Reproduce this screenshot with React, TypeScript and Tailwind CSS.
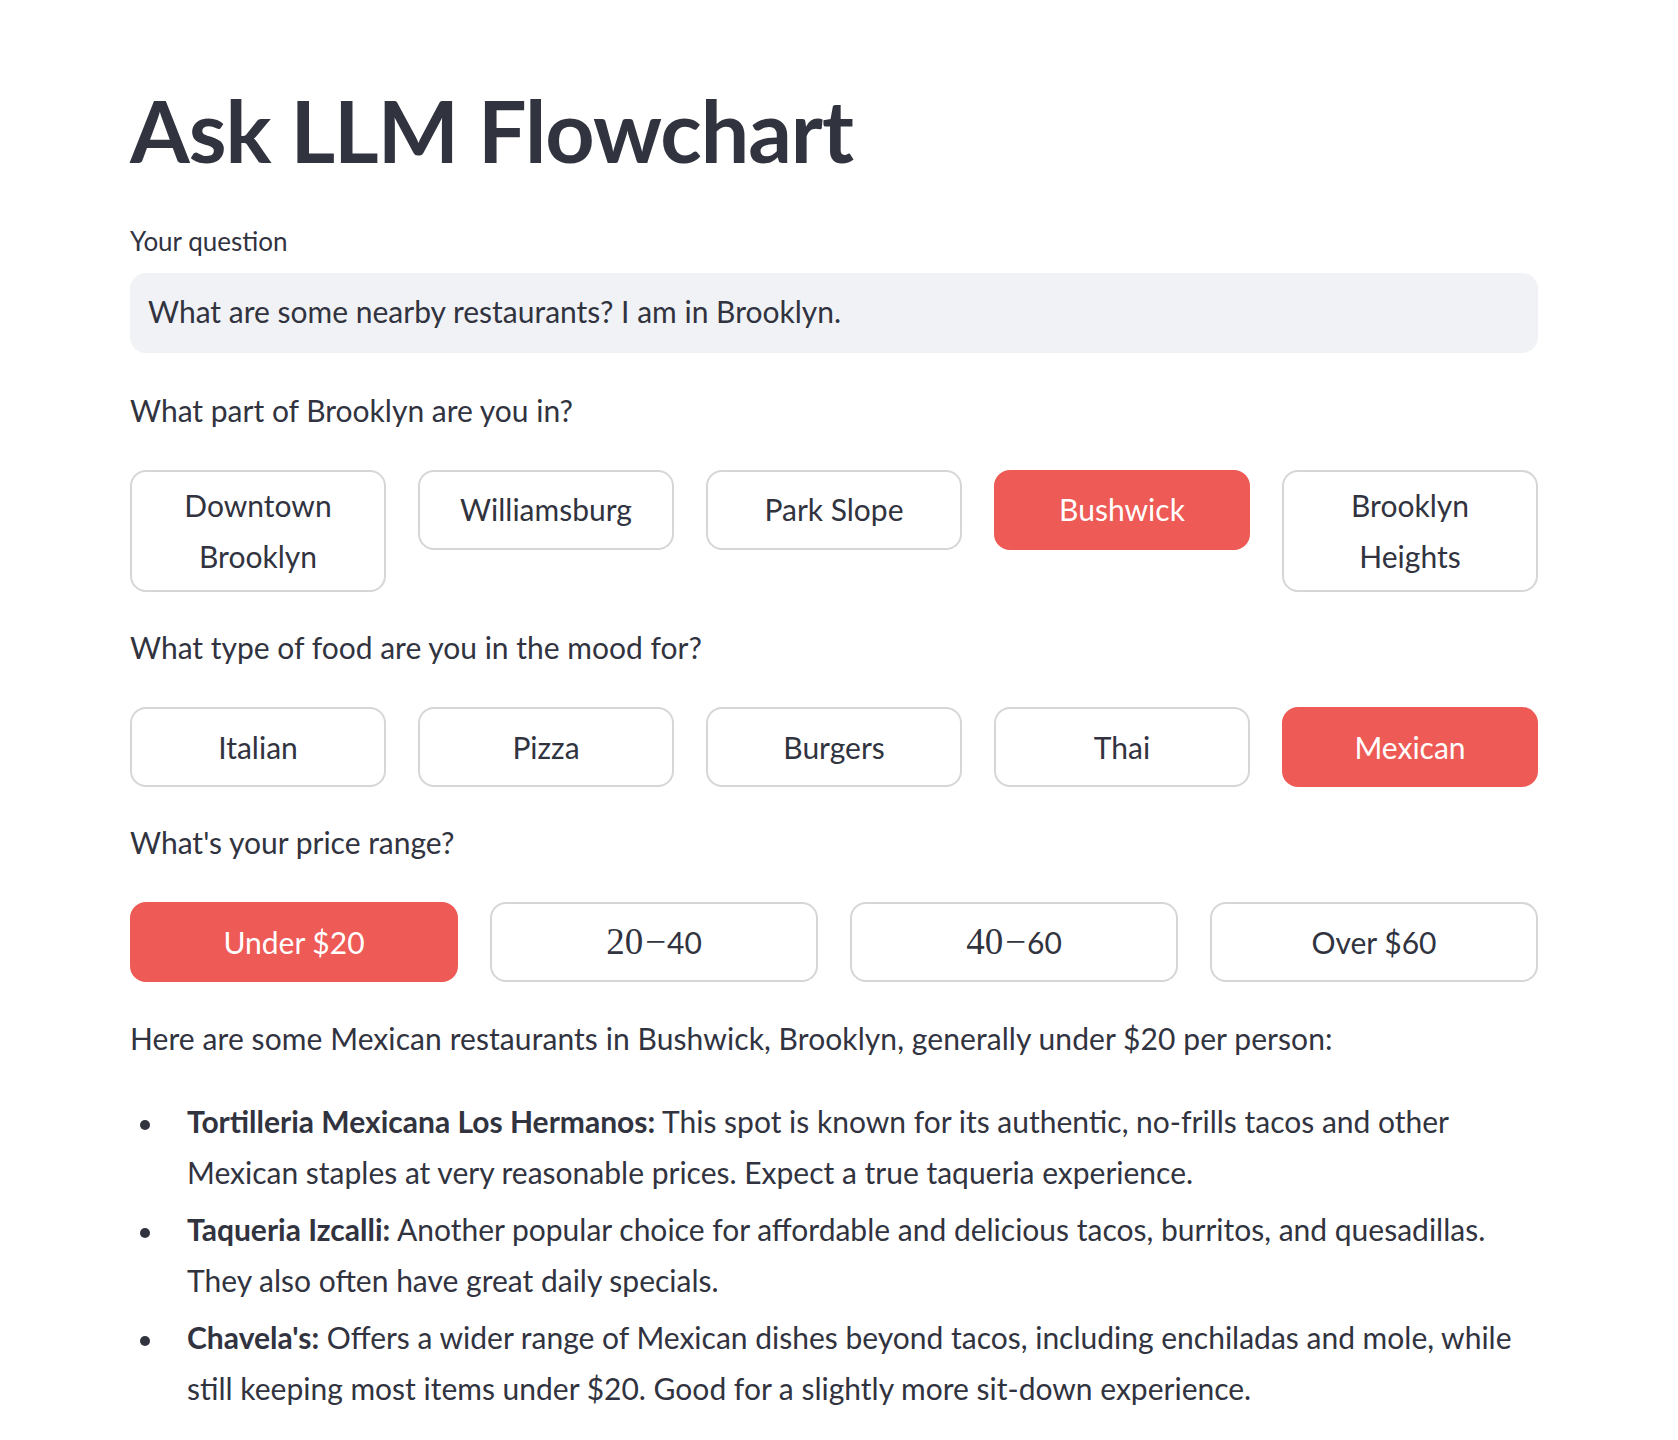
import React from 'react';

interface ChoiceProps {
  lines: React.ReactNode[];
  active?: boolean;
}

const Choice: React.FC<ChoiceProps> = ({ lines, active }) => {
  const base =
    'flex min-h-[80px] w-full flex-col items-center justify-center rounded-[16px] border-2 px-[24px] py-[8px] text-[30px] leading-[51.2px]';
  const tone = active
    ? 'border-[#ee5a55] bg-[#ee5a55] text-white'
    : 'border-[#d6d6d9] bg-white text-[#31333f]';
  return (
    <button className={`${base} ${tone}`}>
      {lines.map((line, i) => (
        <span key={i} className="whitespace-nowrap">
          {line}
        </span>
      ))}
    </button>
  );
};

const Range: React.FC<{ from: string; to: string }> = ({ from, to }) => (
  <span className="flex items-baseline">
    <span className="font-['Liberation_Serif',serif] text-[37px]">{from}</span>
    <span className="ml-[2px] mr-[1px] font-['Liberation_Serif',serif] text-[37px]">−</span>
    <span>{to}</span>
  </span>
);

const Bullet: React.FC<{ children: React.ReactNode }> = ({ children }) => (
  <li className="mb-[6px] flex">
    <span className="w-[57px] shrink-0">
      <span className="ml-[10px] mt-[24px] block h-[10px] w-[10px] rounded-full bg-[#31333f]" />
    </span>
    <span className="block">{children}</span>
  </li>
);

const App: React.FC = () => {
  return (
    <div className="min-h-[1440px] bg-white font-['Lato','Noto_Sans',sans-serif] text-[#31333f]">
      <div className="ml-[130px] w-[1408px] pt-[78px]">
        <h1 className="text-[86px] font-bold leading-[103px] tracking-[-1px]">Ask LLM Flowchart</h1>

        <div className="mt-[42px] text-[26px] leading-[36px]">Your question</div>
        <div className="mt-[14px] flex h-[80px] items-center rounded-[16px] bg-[#f0f2f6] px-[18px] pb-[4px] text-[30px]">
          What are some nearby restaurants? I am in Brooklyn.
        </div>

        <p className="mt-[32px] text-[30px] leading-[51px]">What part of Brooklyn are you in?</p>
        <div className="mt-[34px] grid grid-cols-5 items-start gap-x-[32px]">
          <Choice lines={['Downtown', 'Brooklyn']} />
          <Choice lines={['Williamsburg']} />
          <Choice lines={['Park Slope']} />
          <Choice lines={['Bushwick']} active />
          <Choice lines={['Brooklyn', 'Heights']} />
        </div>

        <p className="mt-[30px] text-[30px] leading-[51px]">What type of food are you in the mood for?</p>
        <div className="mt-[34px] grid grid-cols-5 items-start gap-x-[32px]">
          <Choice lines={['Italian']} />
          <Choice lines={['Pizza']} />
          <Choice lines={['Burgers']} />
          <Choice lines={['Thai']} />
          <Choice lines={['Mexican']} active />
        </div>

        <p className="mt-[30px] text-[30px] leading-[51px]">What's your price range?</p>
        <div className="mt-[34px] grid grid-cols-4 items-start gap-x-[32px]">
          <Choice lines={['Under $20']} active />
          <Choice lines={[<Range from="20" to="40" />]} />
          <Choice lines={[<Range from="40" to="60" />]} />
          <Choice lines={['Over $60']} />
        </div>

        <p className="mt-[31px] text-[30px] leading-[51px] tracking-[0.08px]">
          Here are some Mexican restaurants in Bushwick, Brooklyn, generally under $20 per person:
        </p>

        <ul className="mt-[32px] text-[30px] leading-[51px]">
          <Bullet>
            <span className="whitespace-nowrap">
              <b className="font-bold">Tortilleria Mexicana Los Hermanos:</b> This spot is known for its authentic, no-frills tacos and other
            </span>
            <br />
            <span className="whitespace-nowrap">Mexican staples at very reasonable prices. Expect a true taqueria experience.</span>
          </Bullet>
          <Bullet>
            <span className="whitespace-nowrap">
              <b className="font-bold">Taqueria Izcalli:</b> Another popular choice for affordable and delicious tacos, burritos, and quesadillas.
            </span>
            <br />
            <span className="whitespace-nowrap">They also often have great daily specials.</span>
          </Bullet>
          <Bullet>
            <span className="whitespace-nowrap">
              <b className="font-bold">Chavela's:</b> Offers a wider range of Mexican dishes beyond tacos, including enchiladas and mole, while
            </span>
            <br />
            <span className="whitespace-nowrap">still keeping most items under $20. Good for a slightly more sit-down experience.</span>
          </Bullet>
        </ul>
      </div>
    </div>
  );
};

export default App;
